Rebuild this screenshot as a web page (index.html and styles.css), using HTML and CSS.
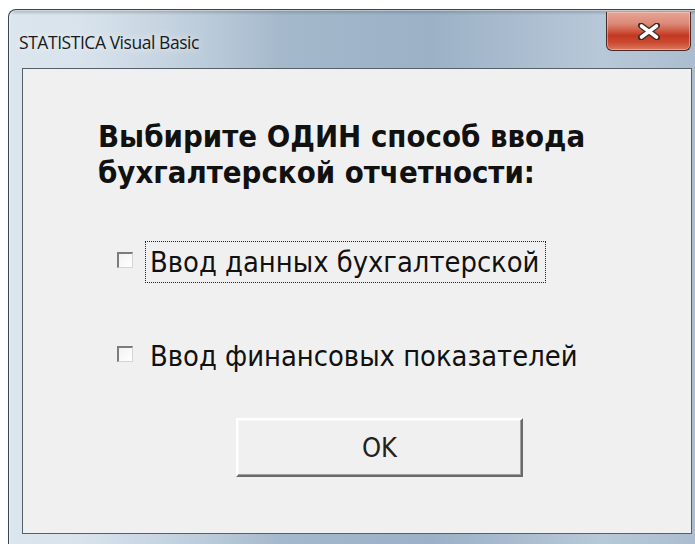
FILE: index.html
```html
<!DOCTYPE html>
<html lang="ru">
<head>
<meta charset="utf-8">
<title>STATISTICA Visual Basic</title>
<link rel="stylesheet" href="styles.css">
</head>
<body>
<div class="window">
  <div class="titlebar">
    <span class="title">STATISTICA Visual Basic</span>
    <button class="close" type="button" aria-label="Закрыть">
      <svg width="22" height="17" viewBox="0 0 22 17">
        <path d="M3 2.5 L19 14.5 M19 2.5 L3 14.5" stroke="#3b2a2a" stroke-width="6" stroke-linecap="round"/>
        <path d="M3.5 3 L18.5 14 M18.5 3 L3.5 14" stroke="#ffffff" stroke-width="3.6" stroke-linecap="round"/>
      </svg>
    </button>
  </div>
  <div class="client">
    <h1 class="prompt">Выбирите ОДИН способ ввода<br>бухгалтерской отчетности:</h1>
    <div class="options">
      <label class="option">
        <span class="box"></span>
        <span class="caption focused">Ввод данных бухгалтерской</span>
      </label>
      <label class="option">
        <span class="box"></span>
        <span class="caption">Ввод финансовых показателей</span>
      </label>
    </div>
    <button class="ok" type="button">OK</button>
  </div>
</div>
</body>
</html>
```
FILE: styles.css
```css
html, body {
  margin: 0;
  padding: 0;
  background: #ffffff;
  overflow: hidden;
  width: 695px;
  height: 544px;
}

.window {
  margin: 9px 0 0 8px;
  width: 700px;
  height: 545px;
  box-sizing: border-box;
  padding: 0 16px 0 13px;
  border: 1px solid #3e444b;
  border-bottom: none;
  border-radius: 8px 8px 0 0;
  background:
    linear-gradient(180deg, rgba(70,80,90,0.35) 0px, rgba(70,80,90,0) 5px),
    linear-gradient(90deg, rgba(235,242,248,0.6) 0px, rgba(235,242,248,0.6) 70px, rgba(235,242,248,0) 270px),
    linear-gradient(90deg, #c4d3e0 0%, #a4b8cb 40%, #9cb1c6 60%, #b7c8d8 85%, #a9bccf 100%);
  box-shadow: inset 1px 1px 0 rgba(255,255,255,0.45);
}

.titlebar {
  display: flex;
  align-items: flex-start;
  height: 58px;
}

.title {
  margin: 20px 0 0 -3px;
  font-family: "Open Sans", "Noto Sans", sans-serif;
  font-size: 17.5px;
  color: #1a1a1a;
  letter-spacing: -0.45px;
  text-shadow: 0 0 8px rgba(255,255,255,0.9);
}

.close {
  margin: 2px 0 0 auto;
  width: 85px;
  height: 39px;
  padding: 0;
  border: 1px solid #4a2a26;
  border-top: none;
  border-radius: 0 0 6px 6px;
  background: linear-gradient(180deg, #e6a597 0%, #dc8a78 30%, #cf5a43 50%, #c2371f 62%, #cb4a30 80%, #d97a60 100%);
  box-shadow: inset 0 0 0 1px rgba(255,220,210,0.45);
  display: flex;
  align-items: center;
  justify-content: center;
}

.client {
  width: 670px;
  height: 466px;
  box-sizing: border-box;
  border: 1px solid #56606b;
  background: #f0f0f0;
  display: flex;
  flex-direction: column;
  align-items: flex-start;
  padding: 49px 0 0 75px;
  font-family: "DejaVu Sans", sans-serif;
  color: #111111;
}

.prompt {
  margin: 0;
  font-size: 30.8px;
  font-weight: bold;
  line-height: 36px;
  font-stretch: condensed;
}

.options {
  display: flex;
  flex-direction: column;
  gap: 52px;
  margin: 51px 0 0 19px;
}

.option {
  display: flex;
  align-items: center;
  gap: 12px;
  font-size: 28.8px;
  font-stretch: condensed;
}

.box {
  flex: 0 0 auto;
  width: 13px;
  height: 13px;
  margin-top: -5px;
  border-top: 2px solid #7c7c7c;
  border-left: 2px solid #7c7c7c;
  border-right: 1px solid #d4d4d4;
  border-bottom: 1px solid #d4d4d4;
  background: linear-gradient(135deg, #f2f2f2, #ffffff);
}

.caption {
  padding: 5px 6px 5px 4px;
  border: 1px dotted transparent;
  line-height: 30px;
}

.caption.focused {
  border-color: #222222;
}

.ok {
  margin: 41px 0 0 138px;
  width: 287px;
  height: 59px;
  box-sizing: border-box;
  font-family: "DejaVu Sans", sans-serif;
  font-stretch: condensed;
  font-size: 27px;
  color: #222222;
  background: #f0f0f0;
  border: 2px solid;
  border-color: #ffffff #6a6a6a #6a6a6a #ffffff;
  box-shadow: inset -1px -1px 0 #a0a0a0, inset 1px 1px 0 #f8f8f8;
}
```
